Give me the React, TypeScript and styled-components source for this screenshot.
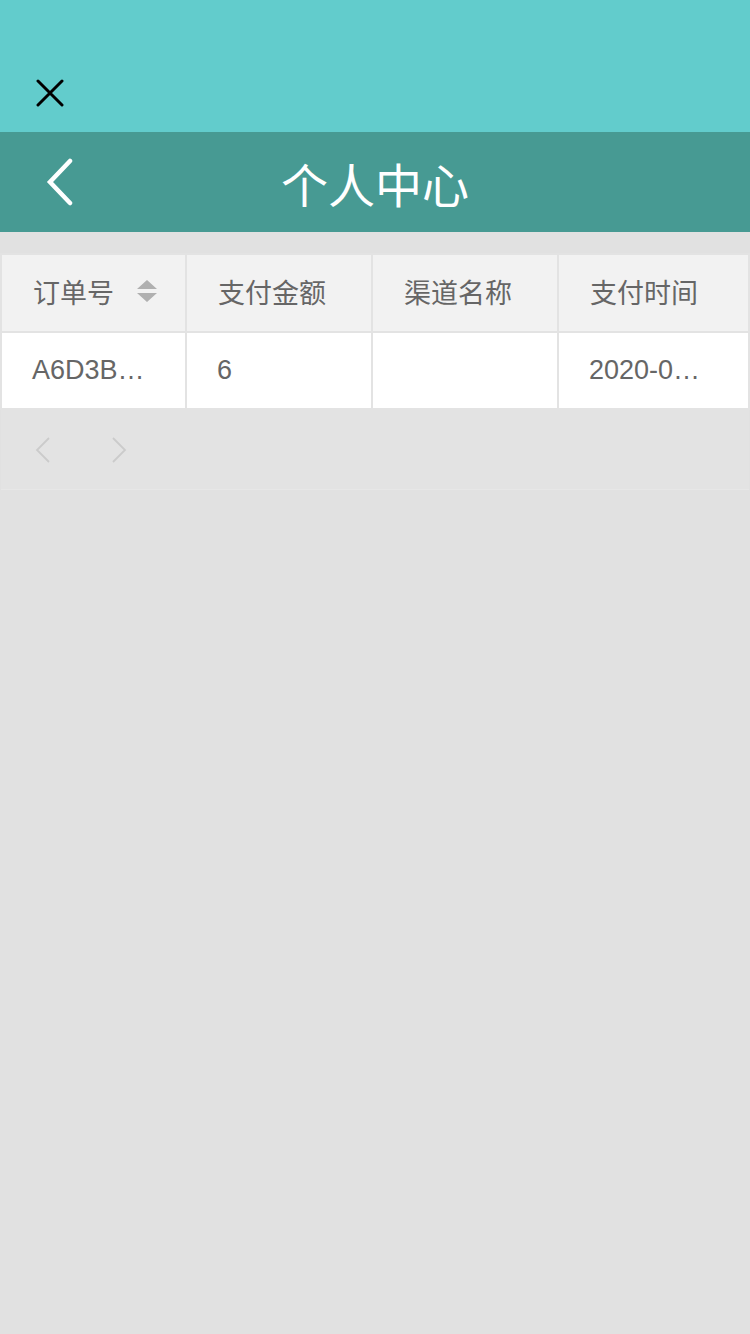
import React from 'react';
import styled, { createGlobalStyle } from 'styled-components';

const GlobalStyle = createGlobalStyle`
  html, body {
    margin: 0;
    padding: 0;
    background: #e1e1e1;
    font-family: "Liberation Sans", "Noto Sans CJK SC", sans-serif;
  }
`;

const Page = styled.div`
  width: 750px;
  min-height: 1334px;
  background: #e1e1e1;
`;

const StatusBar = styled.div`
  height: 132px;
  background: #62cccc;
  display: flex;
  align-items: flex-end;
  padding: 0 0 25px 36px;
  box-sizing: border-box;
`;

const NavBar = styled.div`
  height: 100px;
  background: #479a93;
  display: flex;
  align-items: center;
  position: relative;
`;

const BackButton = styled.div`
  width: 100px;
  height: 100px;
  display: flex;
  align-items: center;
  padding-left: 44px;
  box-sizing: border-box;
`;

const Title = styled.h1`
  position: absolute;
  left: 0;
  right: 0;
  margin: 0;
  text-align: center;
  color: #fff;
  font-size: 47px;
  font-weight: normal;
  pointer-events: none;
`;

const TableWrap = styled.div`
  margin-top: 21px;
`;

const Table = styled.table`
  width: 100%;
  border-collapse: collapse;
  table-layout: fixed;
`;

const Col = styled.col<{ $w?: number }>`
  width: ${(p) => (p.$w ? `${p.$w}px` : 'auto')};
`;

const HeadCell = styled.th`
  height: 78px;
  padding: 0 0 0 31px;
  background: #f2f2f2;
  border: 2px solid #e3e3e3;
  color: #666;
  font-size: 27px;
  font-weight: normal;
  text-align: left;
  white-space: nowrap;
  box-sizing: border-box;
`;

const HeadInner = styled.div`
  display: flex;
  align-items: center;
  gap: 22px;
  margin-top: -4px;
`;

const BodyCell = styled.td`
  height: 77px;
  padding: 0 0 0 30px;
  background: #fff;
  border: 2px solid #e3e3e3;
  color: #666;
  font-size: 27px;
  white-space: nowrap;
  overflow: hidden;
  text-overflow: ellipsis;
  box-sizing: border-box;
`;

const Pager = styled.div`
  height: 80px;
  margin: 0 1px;
  background: #e3e3e3;
  border-bottom: 1px solid #e7e7e7;
  display: flex;
  align-items: center;
  gap: 58px;
  padding-left: 33px;
  box-sizing: border-box;
`;

const CloseIcon = () => (
  <svg width="28" height="28" viewBox="0 0 28 28">
    <path d="M2 2 L26 26 M26 2 L2 26" stroke="#000" strokeWidth="3" strokeLinecap="round" />
  </svg>
);

const BackIcon = () => (
  <svg width="30" height="48" viewBox="0 0 30 48">
    <path d="M26 3 L6 24 L26 45" stroke="#fff" strokeWidth="4.5" fill="none" strokeLinecap="round" strokeLinejoin="miter" />
  </svg>
);

const SortIcon = () => (
  <svg width="22" height="26" viewBox="0 0 22 26">
    <path d="M11 2 L21 11 L1 11 Z M11 24 L21 15 L1 15 Z" fill="#b0b0b0" />
  </svg>
);

const PageArrow = ({ dir }: { dir: 'prev' | 'next' }) => (
  <svg width="18" height="28" viewBox="0 0 18 28">
    <path
      d={dir === 'prev' ? 'M15 2 L3 14 L15 26' : 'M3 2 L15 14 L3 26'}
      stroke="#cbcbcb"
      strokeWidth="1.8"
      fill="none"
    />
  </svg>
);

const columns = ['订单号', '支付金额', '渠道名称', '支付时间'];
const rows = [['A6D3B…', '6', '', '2020-0…']];

const App = () => {
  return (
    <Page>
      <GlobalStyle />
      <StatusBar>
        <CloseIcon />
      </StatusBar>
      <NavBar>
        <BackButton>
          <BackIcon />
        </BackButton>
        <Title>个人中心</Title>
      </NavBar>
      <TableWrap>
        <Table>
          <colgroup>
            <Col $w={185} />
            <Col $w={186} />
            <Col $w={186} />
            <Col />
          </colgroup>
          <thead>
            <tr>
              {columns.map((c, i) => (
                <HeadCell key={c}>
                  <HeadInner>
                    {c}
                    {i === 0 && <SortIcon />}
                  </HeadInner>
                </HeadCell>
              ))}
            </tr>
          </thead>
          <tbody>
            {rows.map((r, ri) => (
              <tr key={ri}>
                {r.map((v, ci) => (
                  <BodyCell key={ci}>{v}</BodyCell>
                ))}
              </tr>
            ))}
          </tbody>
        </Table>
      </TableWrap>
      <Pager>
        <PageArrow dir="prev" />
        <PageArrow dir="next" />
      </Pager>
    </Page>
  );
};

export default App;
